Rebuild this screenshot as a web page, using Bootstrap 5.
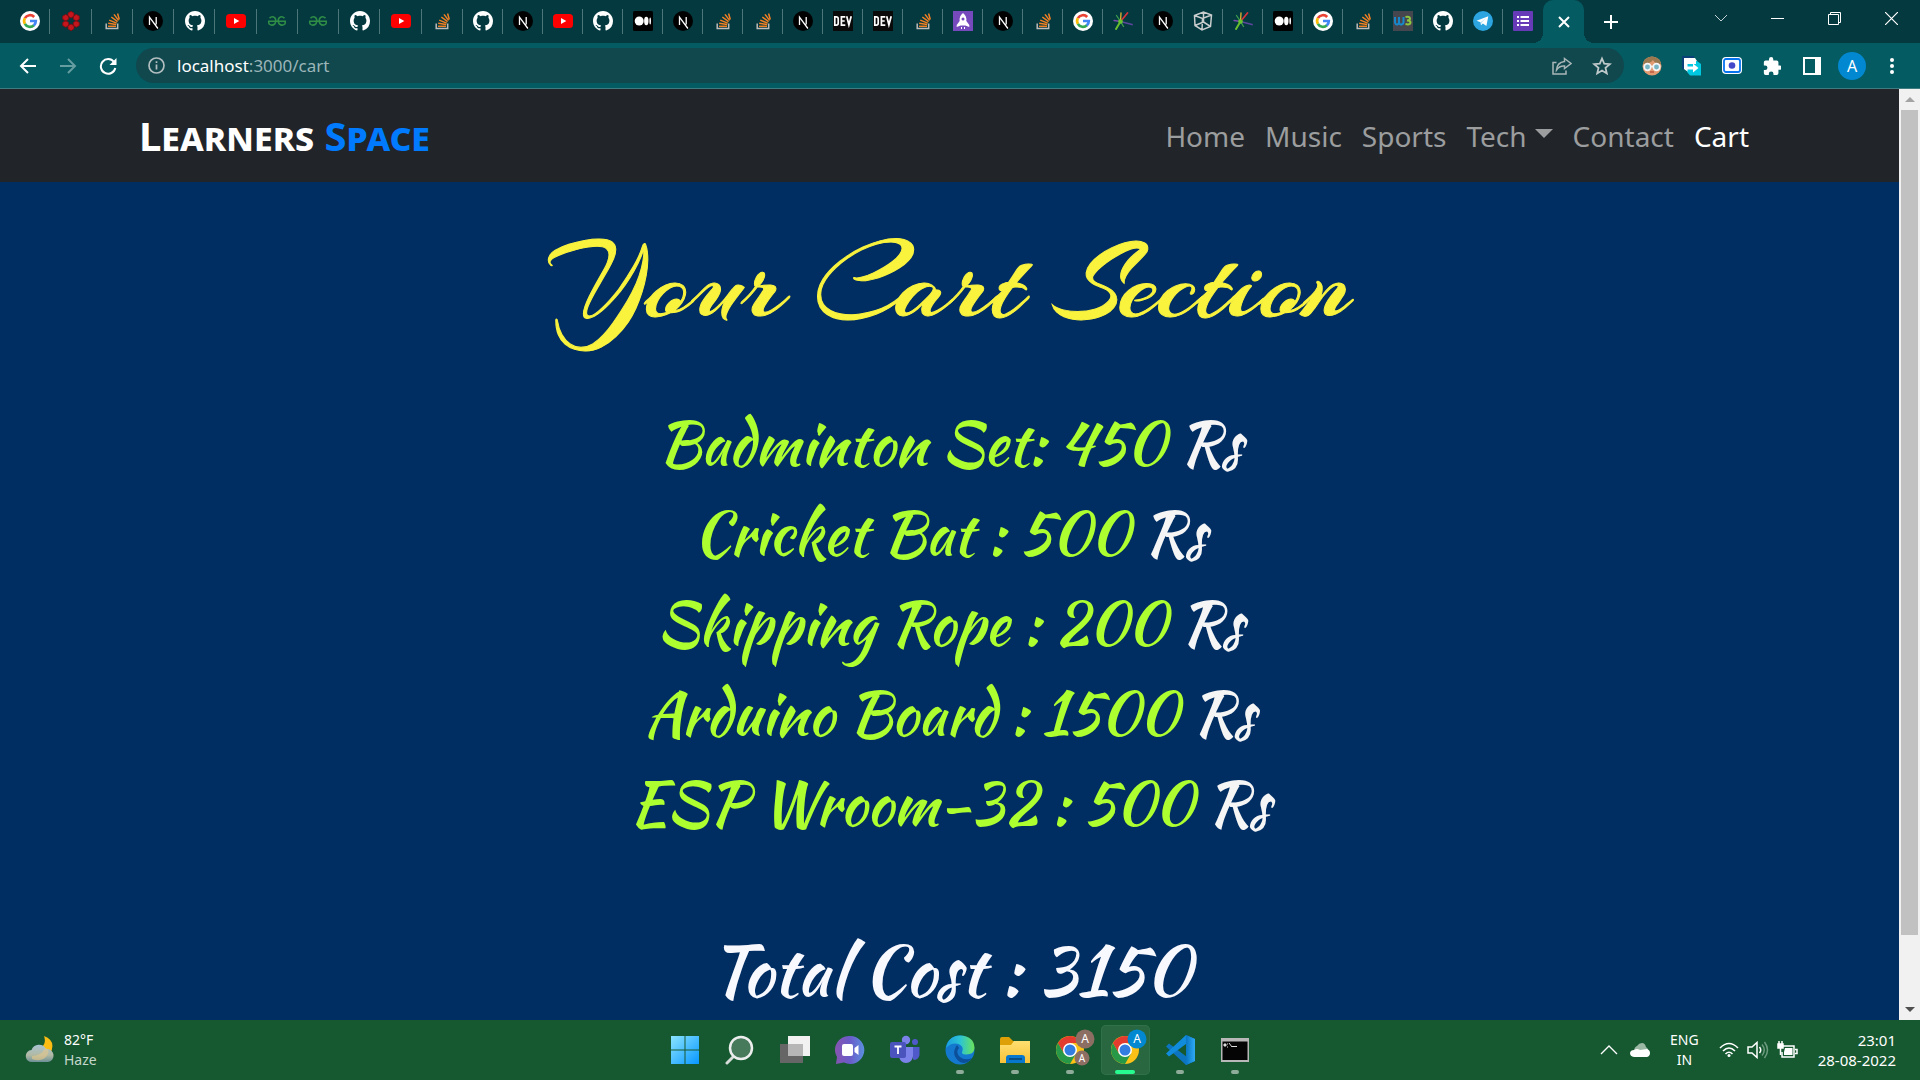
<!DOCTYPE html>
<html lang="en">
<head>
<meta charset="utf-8">
<meta name="viewport" content="width=device-width, initial-scale=1">
<title>Cart - Learners Space</title>
<link rel="stylesheet" href="https://cdn.jsdelivr.net/npm/bootstrap@5.3.0/dist/css/bootstrap.min.css">
<style>
:root{--ui:"Noto Sans","Open Sans",sans-serif;--script:"Kaushan Script","Liberation Serif",serif}
body{font-family:var(--ui);background:#002e63}
button,.tab,.task{background:none;border:0;padding:0;color:inherit;display:flex;align-items:center;justify-content:center}
svg{display:block;flex:none}
.tabstrip{background:#03393f;height:43px}
.tabgroup-a{width:454px;margin-left:9px}
.tab{flex:1 0 0;height:42px;position:relative}
.tabgroup-b .tab{flex:0 0 40px}
.tab:not(.lasttab)::after{content:"";position:absolute;right:0;top:9px;width:1px;height:25px;background:#4b777b}
.tab svg{width:20px;height:20px}
.tab-on{width:41px;height:43px;background:#045b62;border-radius:10px 10px 0 0;color:#fff;position:relative}
.tab-on::before,.tab-on::after{content:"";position:absolute;bottom:0;width:10px;height:10px}
.tab-on::before{left:-10px;background:radial-gradient(circle at 0 0,transparent 10px,#045b62 10px)}
.tab-on::after{right:-10px;background:radial-gradient(circle at 100% 0,transparent 10px,#045b62 10px)}
.newtab{width:54px;height:43px}
.winbtn{width:57px;height:36px}
.toolbar{background:#045b62;height:46px;border-bottom:1px solid #3f7c82;padding-top:5px}
.navbtn{width:40px;height:35px}
.omni{background:#10484e;border-radius:18px;height:35px;padding:0 12px;color:#b9c6c8}
.url{font-size:17px;line-height:24px;color:#9db5b8;text-decoration:none}
.url b{font-weight:400;color:#fff}
.extbtn{width:40px;height:35px}
.avatar{width:28px;height:28px;border-radius:50%;background:#0288d1;color:#fff;font-size:16px;line-height:28px}
.sitebar{background:#212529;height:93px;padding:0 150px 0 139px}
.brandname{font-size:40px;line-height:48px;font-weight:700;font-variant:small-caps;color:#fff;text-decoration:none}
.brandname span{color:#007bff}
.sitebar .nav{gap:20px}
.sitebar .nav-link{font-size:28px;line-height:40px;padding:0;color:#9b9d9e}
.sitebar .nav-link.active{color:#fff}
.sitebar .dropdown-toggle::after{border-top-width:9px;border-left-width:9px;border-right-width:9px;margin-left:8px;vertical-align:9px}
.carttitle{font-family:"Arizonia","Kaushan Script","Liberation Serif",cursive;font-size:114px;line-height:120px;font-weight:400;-webkit-text-stroke:1px #faf33e;color:#faf33e;padding-top:43px;margin:0}
.cartlist{font-family:var(--script);font-size:60px;line-height:90px;color:#adff2f;margin:54px 0 0;padding:0;list-style:none}
.cartlist span{color:#f5f5f5}
.carttotal{font-family:var(--script);font-size:70px;line-height:90px;color:#f8f8ff;margin:77px 0 0}
.scroller{width:21px;background:#f1f1f1;padding:0 2px 0 2px}
.scroller button{height:21px}
.thumb{background:#c1c1c1;flex:825 0 0}
.trough{flex:64 0 0}
.taskbar{background:#165830;height:60px;color:#fff;display:grid;grid-template-columns:1fr auto 1fr;font-size:14px;line-height:20px}
.tasklist{gap:6px}
.task{width:49px;height:50px;position:relative;border-radius:5px}
.task svg{width:30px;height:30px}
.task .twobadges{height:42px}
.task.running::after{content:"";position:absolute;bottom:1px;width:8px;height:4px;border-radius:2px;background:#8eac99}
.task.current{background:#28673f;box-shadow:0 0 0 1px #31704a inset}
.task.current::after{width:20px;background:#27fb8f}
.chev{margin-right:12px}
.clock{font-size:15px}
.haze{color:#c5d6cb}
</style>
<script src="https://cdn.jsdelivr.net/npm/bootstrap@5.3.0/dist/js/bootstrap.bundle.min.js"></script>
</head>
<body class="d-flex flex-column vh-100 overflow-hidden">
<svg width="0" height="0" class="position-absolute" aria-hidden="true">
<defs>
<symbol id="google" viewBox="0 0 20 20"><circle cx="10" cy="10" r="10" fill="#fff"/><g fill="none" stroke-width="2.7"><path d="M4.9 7.2A5.8 5.8 0 0 1 14.2 6" stroke="#ea4335"/><path d="M4.9 7.1a5.8 5.8 0 0 0 0 5.8" stroke="#fbbc05"/><path d="M4.9 12.8a5.8 5.8 0 0 0 9 1.5" stroke="#34a853"/><path d="M10 10h5.8a5.8 5.8 0 0 1-2 4.4" stroke="#4285f4"/></g></symbol>
<symbol id="gear" viewBox="0 0 20 20"><g fill="#c4161c" stroke="#7e0c12" stroke-width=".8"><path d="M10 .3l3 1.7v3.2L10 7 7 5.200V2zM15.300 3.400l3 1.700v3.200l-3 1.700-3-1.700V5.100zM15.300 9.700l3 1.700v3.200l-3 1.700-3-1.700v-3.200zM10 13l3 1.700v3.200L10 19.700l-3-1.800v-3.200zM4.700 9.700l3 1.700v3.200l-3 1.700-3-1.700v-3.200zM4.700 3.400l3 1.700v3.200l-3 1.700-3-1.700V5.100z"/></g></symbol>
<symbol id="so" viewBox="0 0 20 20"><path d="M4.200 12.500v5h11.500v-5" fill="none" stroke="#bcbbbb" stroke-width="1.500"/><g stroke="#f48024" stroke-width="1.500"><path d="M6 15.300h8"/><path d="M6.200 12.300l8 1.300"/><path d="M7.200 9.100l7.500 3"/><path d="M9.300 6l6.300 4.700"/><path d="M12 3.400l4.600 6"/><path d="M15.600 2.500l1.700 6"/></g></symbol>
<symbol id="next" viewBox="0 0 20 20"><circle cx="10" cy="10" r="10" fill="#000"/><path d="M6.500 14V6.200L14.900 17.500M13.200 6v7.500" fill="none" stroke="#fff" stroke-width="1.300"/></symbol>
<symbol id="github" viewBox="0 0 16 16"><path fill="#fff" d="M8 0C3.580 0 0 3.580 0 8c0 3.540 2.290 6.530 5.470 7.590.4.070.55-.17.55-.38 0-.19-.01-.82-.01-1.490-2.010.37-2.530-.49-2.690-.94-.09-.23-.48-.94-.82-1.130-.28-.15-.68-.52-.01-.53.63-.01 1.080.58 1.230.82.72 1.210 1.870.87 2.330.66.070-.52.28-.87.51-1.070-1.780-.2-3.640-.89-3.640-3.950 0-.87.31-1.590.82-2.150-.08-.2-.36-1.020.08-2.120 0 0 .67-.21 2.200.82.64-.18 1.320-.27 2-.27s1.360.09 2 .27c1.530-1.040 2.200-.82 2.200-.82.44 1.100.16 1.920.08 2.120.51.56.82 1.270.82 2.150 0 3.070-1.870 3.750-3.650 3.950.29.25.54.73.54 1.480 0 1.070-.01 1.930-.01 2.200 0 .21.15.46.55.38A8.010 8.010 0 0 0 16 8c0-4.420-3.580-8-8-8"/></symbol>
<symbol id="yt" viewBox="0 0 20 20"><rect y="3" width="20" height="14" rx="3.500" fill="#f00"/><path d="M8 7l5.300 3L8 13z" fill="#fff"/></symbol>
<symbol id="gfg" viewBox="0 0 20 20"><path d="M2.500 7.300Q5 4.600 7.600 6.600 9.800 9 8 12.600 5 15.600 2.200 13 1.600 12 1.700 10.500M17.500 7.300Q15 4.600 12.400 6.600 10.200 9 12 12.600 15 15.600 17.800 13 18.400 12 18.300 10.500M1 10.300h18" fill="none" stroke="#2f8d46" stroke-width="1.600"/></symbol>
<symbol id="medium" viewBox="0 0 20 20"><rect width="20" height="20" rx="1.500"/><g fill="#fff"><circle cx="6.200" cy="10" r="4.500"/><ellipse cx="13.300" cy="10" rx="2.200" ry="4.200"/><ellipse cx="17.200" cy="10" rx=".8" ry="3.600"/></g></symbol>
<symbol id="dev" viewBox="0 0 20 20"><rect width="20" height="20" fill="#0a0a0a"/><g fill="none" stroke="#fff" stroke-width="1.700"><path d="M1.800 5.800v8.400h1.400q2-.2 2-2V7.800q0-2-2-2zM12.300 5.800H8.400v8.400h3.900M8.400 10h3.300M13.700 5.200l2.200 8.600 2.300-8.600"/></g></symbol>
<symbol id="rocket" viewBox="0 0 20 20"><rect width="20" height="20" fill="#764abc"/><path d="M10 2q4 3 3.300 8l3 4v2l-4-1.500H7.700L3.700 16v-2l3-4Q6 5 10 2zM8 16h1v2H8zm3 0h1v2h-1z" fill="#fff"/><circle cx="10" cy="8" r="1.500" fill="#764abc"/></symbol>
<symbol id="burst" viewBox="0 0 20 20"><g stroke-width="1.300" fill="none" stroke-linecap="round"><path d="M7.500 10.500L3 18" stroke="#6ac02e" stroke-width="2"/><path d="M7.500 10.500L1 9.500" stroke="#7a4ba8"/><path d="M7.500 10.500l-4-6" stroke="#3c9e4f"/><path d="M7.500 10.500L8 2" stroke="#e5b52e"/><path d="M7.500 10.500L14.500 2" stroke="#d2333c" stroke-width="1.800"/><path d="M7.500 10.500L19 13.500" stroke="#5b459d" stroke-width="1.800"/><path d="M7.500 10.500l3 5" stroke="#3c9e4f"/></g><circle cx="7.500" cy="10.500" r="2.300" fill="#65c32d"/></symbol>
<symbol id="cube" viewBox="0 0 20 20"><path d="M1.500 4.500L10.500 1l8 3-1 11.500L9 19 2 14.500zM1.500 4.500L9.500 7.500l9-3.500M9.500 7.500L9 19M10.500 1v10l7 4.500M10.500 11L2 14.500" fill="none" stroke="#c9cdce" stroke-width="1.500"/></symbol>
<symbol id="w3" viewBox="0 0 20 20"><rect width="20" height="20" fill="#46464f"/><path d="M2 6v5q.3 3 2.500 2.500Q6 13 6 11V6v5q.3 3 2.500 2.500 2-.5 2-2.500V6" fill="none" stroke="#1689ce" stroke-width="2"/><path d="M12.500 6q4.500-.8 4.500 1.500Q17 9.200 14 9.500q3.500 0 3.500 2.200-.5 2.500-5 1.300" fill="none" stroke="#8dc63f" stroke-width="2"/></symbol>
<symbol id="telegram" viewBox="0 0 20 20"><circle cx="10" cy="10" r="10" fill="#2ca5e0"/><path d="M3.500 9.800l11.800-4.600-1.900 9.700-3.500-2.500-1.900 1.800-.4-3z" fill="#fff"/><path d="M7.600 11.200l5-3.600-4 4.200-.6 2.200z" fill="#b9dff2"/></symbol>
<symbol id="forms" viewBox="0 0 20 20"><rect width="20" height="20" rx="1" fill="#673ab7"/><path d="M4 5h2v2H4zm0 4h2v2H4zm0 4h2v2H4zM7.500 5H16v2H7.500zm0 4H16v2H7.500zm0 4H16v2H7.500z" fill="#fff"/></symbol>
<symbol id="chrome" viewBox="0 0 30 30"><circle cx="15" cy="15" r="14" fill="#fbc116"/><path d="M2.900 8A14 14 0 0 1 27.100 8H15v7l-6 3.500z" fill="#e33b2e"/><path d="M2.900 8A14 14 0 0 0 15 29l6.100-10.500L15 15l-6 3.500z" fill="#279847"/><circle cx="15" cy="15" r="7" fill="#fff"/><circle cx="15" cy="15" r="5.500" fill="#347de0"/></symbol>
<linearGradient id="win" x2="1" y2="1"><stop stop-color="#8be4ff"/><stop offset="1" stop-color="#0797ff"/></linearGradient>
<linearGradient id="chat" x2="1"><stop stop-color="#8755b0"/><stop offset=".5" stop-color="#6a5bc8"/><stop offset="1" stop-color="#5b8fe0"/></linearGradient>
<linearGradient id="edgeTop" x2="1"><stop stop-color="#199de0"/><stop offset=".5" stop-color="#2cc4d3"/><stop offset="1" stop-color="#6be35a"/></linearGradient>
<linearGradient id="fold" x2="0" y2="1"><stop stop-color="#ffdf70"/><stop offset="1" stop-color="#f8c238"/></linearGradient>
<linearGradient id="vs" x2="1"><stop stop-color="#0876c4"/><stop offset="1" stop-color="#2fa9f4"/></linearGradient>
<linearGradient id="mist" x2="0" y2="1"><stop stop-color="#a8c3d2"/><stop offset=".6" stop-color="#b1b9a4"/><stop offset="1" stop-color="#6d9096"/></linearGradient>
</defs>
</svg>

<header class="flex-shrink-0">
<div class="tabstrip d-flex">
<nav class="tabgroup-a d-flex" aria-label="Open tabs">
<a class="tab" href="#"><svg><use href="#google"/></svg></a><a class="tab" href="#"><svg><use href="#gear"/></svg></a><a class="tab" href="#"><svg><use href="#so"/></svg></a><a class="tab" href="#"><svg><use href="#next"/></svg></a><a class="tab" href="#"><svg><use href="#github"/></svg></a><a class="tab" href="#"><svg><use href="#yt"/></svg></a><a class="tab" href="#"><svg><use href="#gfg"/></svg></a><a class="tab" href="#"><svg><use href="#gfg"/></svg></a><a class="tab" href="#"><svg><use href="#github"/></svg></a><a class="tab" href="#"><svg><use href="#yt"/></svg></a><a class="tab" href="#"><svg><use href="#so"/></svg></a>
</nav>
<nav class="tabgroup-b d-flex" aria-label="More open tabs">
<a class="tab" href="#"><svg><use href="#github"/></svg></a><a class="tab" href="#"><svg><use href="#next"/></svg></a><a class="tab" href="#"><svg><use href="#yt"/></svg></a><a class="tab" href="#"><svg><use href="#github"/></svg></a><a class="tab" href="#"><svg><use href="#medium"/></svg></a><a class="tab" href="#"><svg><use href="#next"/></svg></a><a class="tab" href="#"><svg><use href="#so"/></svg></a><a class="tab" href="#"><svg><use href="#so"/></svg></a><a class="tab" href="#"><svg><use href="#next"/></svg></a><a class="tab" href="#"><svg><use href="#dev"/></svg></a><a class="tab" href="#"><svg><use href="#dev"/></svg></a><a class="tab" href="#"><svg><use href="#so"/></svg></a><a class="tab" href="#"><svg><use href="#rocket"/></svg></a><a class="tab" href="#"><svg><use href="#next"/></svg></a><a class="tab" href="#"><svg><use href="#so"/></svg></a><a class="tab" href="#"><svg><use href="#google"/></svg></a><a class="tab" href="#"><svg><use href="#burst"/></svg></a><a class="tab" href="#"><svg><use href="#next"/></svg></a><a class="tab" href="#"><svg><use href="#cube"/></svg></a><a class="tab" href="#"><svg><use href="#burst"/></svg></a><a class="tab" href="#"><svg><use href="#medium"/></svg></a><a class="tab" href="#"><svg><use href="#google"/></svg></a><a class="tab" href="#"><svg><use href="#so"/></svg></a><a class="tab" href="#"><svg><use href="#w3"/></svg></a><a class="tab" href="#"><svg><use href="#github"/></svg></a><a class="tab" href="#"><svg><use href="#telegram"/></svg></a><a class="tab lasttab" href="#"><svg><use href="#forms"/></svg></a>
</nav>
<button class="tab-on" aria-label="Close tab"><svg width="12" height="12" stroke="#fff" stroke-width="2"><path d="M1 1l10 10M11 1L1 11"/></svg></button>
<button class="newtab" aria-label="New tab"><svg width="16" height="16" stroke="#fff" stroke-width="2"><path d="M8 1v14M1 8h14"/></svg></button>
<div class="d-flex ms-auto">
<button class="winbtn" aria-label="Search tabs"><svg width="14" height="9" fill="none" stroke="#c3d2d4"><path d="M1 1l6 6 6-6"/></svg></button>
<button class="winbtn" aria-label="Minimise"><svg width="13" height="1"><path d="M0 0h13v1H0z" fill="#fff"/></svg></button>
<button class="winbtn" aria-label="Restore"><svg width="13" height="13" fill="none" stroke="#fff"><path d="M.5 2.500h10v10H.5zM2.500 2.500v-2h10v10h-2"/></svg></button>
<button class="winbtn" aria-label="Close window"><svg width="13" height="13" stroke="#fff" stroke-width="1.200"><path d="M0 0l13 13M13 0L0 13"/></svg></button>
</div>
</div>
<div class="toolbar d-flex align-items-start ps-2">
<button class="navbtn" aria-label="Back"><svg width="18" height="18" fill="none" stroke="#fff" stroke-width="2"><path d="M17 9H2M9 2L2 9l7 7"/></svg></button>
<button class="navbtn" aria-label="Forward"><svg width="18" height="18" fill="none" stroke="#659da1" stroke-width="2"><path d="M1 9h15M9 2l7 7-7 7"/></svg></button>
<button class="navbtn" aria-label="Reload"><svg width="18" height="18" fill="none" stroke="#fff" stroke-width="2"><path d="M15 5a7.300 7.300 0 1 0 1.300 6"/><path d="M17.500 1v7h-7z" fill="#fff" stroke="none"/></svg></button>
<div class="omni d-flex align-items-center flex-grow-1 ms-2">
<svg class="me-1" width="17" height="17" fill="none" stroke="#b3bec0" stroke-width="1.700"><circle cx="8.500" cy="8.500" r="7.500"/><path d="M8.500 7.500v5M8.500 4.200v1.900"/></svg>
<a class="url ms-2" href="#"><b>localhost</b>:3000/cart</a>
<span class="flex-grow-1"></span>
<div class="d-flex gap-3 align-items-center">
<button aria-label="Share"><svg width="20" height="18" fill="none" stroke="#a9b6b8" stroke-width="1.500"><path d="M4.500 5.500H1V17h13v-3.500M12.500 1.500L19 6.500l-6.500 5V9Q7.500 8.500 4.500 13 5 5.500 12.500 4.500z"/></svg></button>
<button class="ms-1" aria-label="Bookmark"><svg width="20" height="20" fill="none" stroke="#c0c9ca" stroke-width="1.800"><path d="M10 2.500l2.200 5.200 5.600.5-4.300 3.700 1.300 5.500-4.800-2.900-4.800 2.900 1.300-5.500-4.300-3.700 5.600-.5z"/></svg></button>
</div>
</div>
<div class="d-flex ps-2">
<button class="extbtn" aria-label="Profile extension"><svg width="20" height="20"><circle cx="10" cy="10" r="9.500" fill="#e29a70"/><path d="M1 8Q2 1 10 .5q8 .5 9 7.500-5 1-8-4-3 4-10 4z" fill="#9a7850"/><g fill="#78b5c5" stroke="#f5f5f5" stroke-width="1.700"><circle cx="5.500" cy="11" r="3.300"/><circle cx="14.500" cy="11" r="3.300"/><path d="M9 10.500h2"/></g><path d="M8 16h4" stroke="#a83a2e"/></svg></button>
<button class="extbtn" aria-label="Transfer"><svg width="20" height="20"><path d="M0 0h12v13H0z" fill="#0b3f78"/><path d="M2 2h11l2 3v11H6l-4-3z" fill="#fff"/><path d="M5.500 5H15l4 3v11.500H8l-2.500-3z" fill="#00c8e0"/><path d="M4 4h10v4H4z" fill="#fff"/><path d="M5 10.500h6V7.500l5.500 4.500-5.500 4.500v-3H5z" fill="#fff"/></svg></button>
<button class="extbtn" aria-label="Recorder"><svg width="20" height="17"><rect width="20" height="17" rx="4" fill="#fff"/><rect x="2" y="2" width="16" height="13" rx="2" fill="#fff" stroke="#0874ef" stroke-width="1.800"/><circle cx="10" cy="8.500" r="3.300" fill="#4349c8"/></svg></button>
<button class="extbtn" aria-label="Extensions"><svg width="18" height="18" viewBox="1 1 21 21"><path fill="#fff" d="M20.500 11H19V7a2 2 0 0 0-2-2h-4V3.500a2.500 2.500 0 0 0-5 0V5H4a2 2 0 0 0-2 2v3.800h1.500a2.700 2.700 0 0 1 0 5.400H2V20a2 2 0 0 0 2 2h3.800v-1.500a2.700 2.700 0 0 1 5.400 0V22H17a2 2 0 0 0 2-2v-4h1.500a2.500 2.500 0 0 0 0-5z"/></svg></button>
<button class="extbtn" aria-label="Side panel"><svg width="18" height="18"><path d="M1 1h16v16H1z" fill="none" stroke="#fff" stroke-width="2"/><path d="M12 1h5v16h-5z" fill="#fff"/></svg></button>
<button class="extbtn" aria-label="Account"><span class="avatar">A</span></button>
<button class="extbtn" aria-label="Menu"><svg width="4" height="16" fill="#fff"><circle cx="2" cy="2" r="2"/><circle cx="2" cy="8" r="2"/><circle cx="2" cy="14" r="2"/></svg></button>
<span class="pe-2"></span>
</div>
</div>
</header>

<div class="d-flex flex-grow-1 overflow-hidden">
<main class="flex-grow-1">
<nav class="sitebar d-flex align-items-center justify-content-between">
<a class="brandname" href="#">Learners <span>Space</span></a>
<ul class="nav">
<li class="nav-item"><a class="nav-link" href="#">Home</a></li>
<li class="nav-item"><a class="nav-link" href="#">Music</a></li>
<li class="nav-item"><a class="nav-link" href="#">Sports</a></li>
<li class="nav-item"><a class="nav-link dropdown-toggle" href="#">Tech</a></li>
<li class="nav-item"><a class="nav-link" href="#">Contact</a></li>
<li class="nav-item"><a class="nav-link active" href="#">Cart</a></li>
</ul>
</nav>
<section class="text-center">
<h1 class="carttitle">Your Cart Section</h1>
<ul class="cartlist">
<li>Badminton Set: 450 <span>Rs</span></li>
<li>Cricket Bat : 500 <span>Rs</span></li>
<li>Skipping Rope : 200 <span>Rs</span></li>
<li>Arduino Board : 1500 <span>Rs</span></li>
<li>ESP Wroom-32 : 500 <span>Rs</span></li>
</ul>
<p class="carttotal">Total Cost : 3150</p>
</section>
</main>
<div class="scroller d-flex flex-column flex-shrink-0">
<button aria-label="Scroll up"><svg width="10" height="5"><path d="M0 5l5-5 5 5z" fill="#a3a3a3"/></svg></button>
<div class="thumb"></div><div class="trough"></div>
<button aria-label="Scroll down"><svg width="10" height="5"><path d="M0 0l5 5 5-5z" fill="#505050"/></svg></button>
</div>
</div>

<footer class="taskbar flex-shrink-0 align-items-center">
<div class="d-flex align-items-center gap-2 ps-4">
<svg width="32" height="28"><path d="M20 0q13 5 6 18L16 12q7-4 4-12z" fill="#fbbd13"/><path d="M8 26a6 6 0 0 1-.5-12A8 8 0 0 1 22 13a6.500 6.500 0 0 1 2 13z" fill="url(#mist)"/><path d="M8 20q9 0 13-8 5 1 3 6-5 9-16 5z" fill="#e0c68e" opacity=".65"/></svg>
<div><div>82°F</div><div class="haze">Haze</div></div>
</div>
<div class="tasklist d-flex">
<button class="task" aria-label="Start"><svg viewBox="0 0 30 30"><path d="M1 1h13.500v13.500H1zM15.500 1H29v13.500H15.500zM1 15.500h13.500V29H1zM15.500 15.500H29V29H15.500z" fill="url(#win)"/></svg></button>
<button class="task" aria-label="Search"><svg viewBox="0 0 30 30"><path d="M10 20L2 28" stroke="#d6dcd8" stroke-width="3" stroke-linecap="round"/><circle cx="16" cy="13" r="11" fill="#47795b" stroke="#eceeed" stroke-width="2.500"/></svg></button>
<button class="task" aria-label="Task view"><svg viewBox="0 0 30 30"><path d="M0 9h23v19H0z" fill="#666"/><path d="M8 1h22v20H8z" fill="#f1f1f1"/><path d="M8 9h15v12H8z" fill="#b6b6b6"/></svg></button>
<button class="task" aria-label="Chat"><svg viewBox="0 0 30 30"><path d="M15 1a14 14 0 1 1-6 26.500L1 29l1-7A14 14 0 0 1 15 1z" fill="url(#chat)"/><rect x="7" y="9" width="11" height="12" rx="2" fill="#fff"/><path d="M19.500 13l4-3v10l-4-3z" fill="#fff"/></svg></button>
<button class="task" aria-label="Teams"><svg viewBox="0 0 30 30"><circle cx="16" cy="5" r="4.200" fill="#7b83eb"/><circle cx="25" cy="7" r="3" fill="#5059c9"/><path d="M19 12h10.500v8q-1 5-6 5z" fill="#5059c9"/><path d="M9 12h14v9q-1 7-7 7t-7-7z" fill="#7b83eb"/><rect y="7" width="16" height="16" rx="2" fill="#4b53bc"/><path d="M4.500 11.500h7M8 11.500V19" stroke="#fff" stroke-width="1.800"/></svg></button>
<button class="task running" aria-label="Edge"><svg viewBox="0 0 30 30"><circle cx="15" cy="15" r="14.500" fill="#1479ce"/><path d="M1 13Q3 1 15 .5 29 1 29.500 13q-.5 7-9 6.500-5 0-3-4 1-4-3-6-7-3-13.500 3.500z" fill="url(#edgeTop)"/><path d="M12 10q-7 10 3 17 7 3 12-4-7 3-12-1-5-5-1-9z" fill="#0c4f9a"/></svg></button>
<button class="task running" aria-label="File Explorer"><svg viewBox="0 0 30 30"><path d="M0 4q0-2 2-2h7l4 4h15v8H0z" fill="#dda007"/><path d="M0 10h11l3-4h16v22H0z" fill="url(#fold)"/><path d="M6 28v-5q0-3 3-3h13q3 0 3 3v5z" fill="#0878cf"/><path d="M9 24h13" stroke="#08416f" stroke-width="1.500"/></svg></button>
<button class="task running" aria-label="Chrome, profile one"><svg viewBox="0 0 30 30"><use href="#chrome"/></svg><svg class="twobadges position-absolute top-0 end-0" viewBox="0 0 30 42"><g fill="#8d6e63"><circle cx="20" cy="14" r="9.500"/><circle cx="17" cy="33" r="7.500"/></g><g fill="#fff" text-anchor="middle"><text x="20" y="18" font-size="12">A</text><text x="17" y="37" font-size="10">A</text></g></svg></button>
<button class="task running current" aria-label="Chrome, profile two"><svg viewBox="0 0 30 30"><use href="#chrome"/></svg><svg class="position-absolute top-0 end-0" viewBox="0 0 30 30"><circle cx="17" cy="14" r="9.500" fill="#0288d1"/><text x="17" y="18" font-size="12" fill="#fff" text-anchor="middle">A</text></svg></button>
<button class="task running" aria-label="Visual Studio Code"><svg viewBox="0 0 30 30"><path d="M21 0l9 4v22l-9 4L1 11.500l3-3L22 22z" fill="#0d74c0"/><path d="M1 18.500L21 0v9L4 21.500z" fill="#118bdc"/><path d="M21 0l9 4v22l-9 4z" fill="url(#vs)"/></svg></button>
<button class="task running" aria-label="Command Prompt"><svg viewBox="0 0 30 30"><rect x="1" y="3" width="28" height="24" fill="#b8b8b8"/><path d="M2.500 6.500h25v18.500h-25z" fill="#050505"/><path d="M4 9h2v2H4zM7 9h1M7 12h1M9 8l3 4M12 11.500h5" stroke="#ddd" fill="#ddd"/></svg></button>
</div>
<div class="d-flex align-items-center justify-content-end pe-4">
<button class="chev" aria-label="Hidden icons"><svg width="18" height="10" fill="none" stroke="#fff" stroke-width="1.300"><path d="M1 9l8-8 8 8"/></svg></button>
<svg class="me-3" width="20" height="14"><path d="M4 9q0-5 3-6 2-3 5-3t4 4l2 2v6H4z" fill="#9bb8a5"/><path d="M4 14q-4-.5-4-4 .5-3 4-3 3-2 6 0l7-1q3 1 3 4t-3 4z" fill="#fff"/></svg>
<div class="text-center ps-1 me-3"><div>ENG</div><div>IN</div></div>
<div class="d-flex align-items-center gap-2 px-1">
<svg width="20" height="16" fill="none" stroke="#fff" stroke-width="1.600"><path d="M1 6q9-9 18 0M4 9q6-6 12 0M6.500 12q3.500-3.500 7 0"/><circle cx="10" cy="13.500" r="1.500" fill="#fff" stroke="none"/></svg>
<svg width="22" height="18" fill="none" stroke="#fff" stroke-width="1.500"><path d="M1 6h4l5-4.500v15L5 12H1zM12.500 6q2.500 3 0 6"/><path d="M15 3.500q4.500 5.500 0 11M17.500 1q6 8 0 16" stroke="#6c9a7e"/></svg>
<svg width="21" height="18" fill="none" stroke="#fff" stroke-width="1.500"><path d="M6 5h11v11H5v-5M18 8.500h2v4h-2"/><path d="M8 7h7.500v7H7v-3z" fill="#fff" stroke="none"/><path d="M1 3h5v4H1zM2 0v3M5 0v3M3.500 7v7" fill="#fff"/></svg>
</div>
<div class="clock text-end ms-3"><div>23:01</div><div>28-08-2022</div></div>
</div>
</footer>
</body>
</html>
